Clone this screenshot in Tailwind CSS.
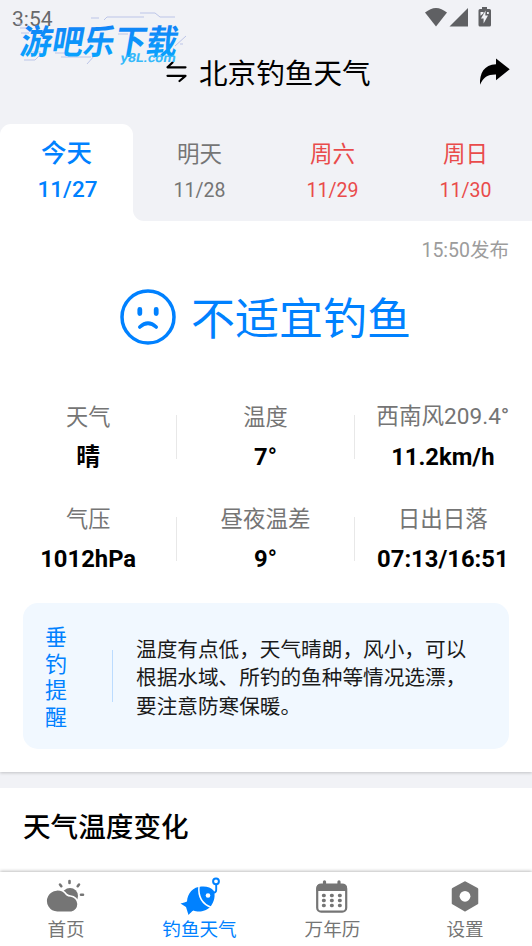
<!DOCTYPE html>
<html lang="zh-CN">
<head>
<meta charset="utf-8">
<title>北京钓鱼天气</title>
<script src="https://cdn.jsdelivr.net/npm/@tailwindcss/browser@4"></script>
</head>
<body class="bg-[#f1f2f6]">
<div class="relative flex h-[946px] w-[532px] flex-col overflow-hidden bg-[#f1f2f6] font-['Roboto','Noto_Sans_CJK_SC',sans-serif] text-black">
  <!-- Status bar -->
  <div class="flex h-9 shrink-0 items-center justify-between pl-[12px] pr-[40px]">
    <span class="pt-px text-[21px] leading-9 text-[#68696b]">3:54</span>
    <svg class="h-9 w-[68px]" viewBox="0 0 68 36" fill="#5f6063">
      <path d="M1 12.600Q12 3.200 23 12.600L12 26.500Z"/>
      <path d="M44 8V26.500H25.500Z"/>
      <path d="M58 7h5v2h2.500q1.500 0 1.500 1.500V25q0 1.500-1.500 1.500h-9.500q-1.500 0-1.500-1.500V10.500q0-1.500 1.500-1.500H58z"/>
      <path d="M61.600 10.500L57 18.400h2.600v5.200L64 15.500h-2.700zM56.500 12h3v1.200l-3 2.500zM63 12h1.800v2H63z" fill="#f1f2f6"/>
    </svg>
  </div>
  <!-- Title bar -->
  <header class="flex h-[88px] shrink-0 items-start pl-[166px] pr-[22px]">
    <svg class="mt-[25px] h-[22px] w-[21px]" viewBox="0 0 21 22" fill="none" stroke="#000" stroke-width="2.200" stroke-linecap="round" stroke-linejoin="round"><path d="M19.500 6.300H1.500L6.500 1.500M1.500 14.800H19.500L13.500 20"/></svg>
    <h1 class="ml-[12px] mt-[18px] text-[28.600px] leading-[40px]">北京钓鱼天气</h1>
    <svg class="ml-auto mt-[22px] h-[28px] w-[31px]" viewBox="0 0 31 28"><path d="M17 0.500L30.700 11.300L17 22.200V16.500C9 16.300 4.500 19 1 26.800C0.500 15 5 7 17 6.300Z"/></svg>
  </header>
  <!-- Day tabs -->
  <div class="relative z-10 grid h-[97px] shrink-0 grid-cols-4 bg-white text-center">
    <div class="bg-linear-to-b from-[#f1f2f6] from-50% to-white to-50%"><div class="h-full rounded-t-[11px] bg-white pt-[11px] font-medium text-[#0081ff]">
      <div class="text-[25.500px] leading-9">今天</div>
      <div class="mt-px pl-[2px] text-[22.500px] leading-[34px]">11/27</div>
    </div></div>
    <div class="rounded-bl-[11px] bg-[#f1f2f6] pt-[12px] text-[#757575]">
      <div class="text-[22.500px] leading-9">明天</div>
      <div class="mt-0.5 text-[19.500px] leading-[34px]">11/28</div>
    </div>
    <div class="bg-[#f1f2f6] pt-[12px] text-[#e94b4b]">
      <div class="text-[22.500px] leading-9">周六</div>
      <div class="mt-0.5 text-[19.500px] leading-[34px]">11/29</div>
    </div>
    <div class="bg-[#f1f2f6] pt-[12px] text-[#e94b4b]">
      <div class="text-[22.500px] leading-9">周日</div>
      <div class="mt-0.5 text-[19.500px] leading-[34px]">11/30</div>
    </div>
  </div>
  <!-- Conditions -->
  <section class="flex h-[551px] shrink-0 flex-col bg-white shadow-[0_1px_3px_rgba(0,0,0,0.2)]">
    <div class="mt-[15px] pr-[23px] text-right text-[19.500px] leading-[30px] text-[#9c9c9c]">15:50发布</div>
    <div class="mt-[21px] flex h-[60px] items-center pl-[119px] text-[#0081ff]">
      <svg class="h-[58px] w-[58px]" viewBox="0 0 58 58" fill="none" stroke="currentColor" stroke-linecap="round"><circle cx="29" cy="29" r="26" stroke-width="3.500"/><path d="M20.800 21.500v4M37.200 21.500v4" stroke-width="4.800"/><path d="M20.800 39Q29 31.500 37.200 39" stroke-width="3.600"/></svg>
      <span class="ml-[14px] pt-[6px] text-[44px] leading-[60px]">不适宜钓鱼</span>
    </div>
    <div class="mt-[50px] grid grid-cols-3 gap-y-[21.500px] text-center">
      <div class="flex h-20 items-center"><div class="flex-1"><div class="text-[22.200px] leading-10 text-[#757575]">天气</div><div class="text-[23.800px] font-bold leading-10">晴</div></div><i class="h-[44px] w-px bg-[#e8e8e8]"></i></div>
      <div class="flex h-20 items-center"><div class="flex-1"><div class="text-[22.200px] leading-10 text-[#757575]">温度</div><div class="text-[23.800px] font-bold leading-10">7°</div></div><i class="h-[44px] w-px bg-[#e8e8e8]"></i></div>
      <div class="flex h-20 items-center pr-px"><div class="flex-1"><div class="whitespace-nowrap text-[22.600px] leading-10 text-[#757575]">西南风209.4°</div><div class="text-[23.800px] font-bold leading-10">11.2km/h</div></div></div>
      <div class="flex h-20 items-center"><div class="flex-1"><div class="text-[22.200px] leading-10 text-[#757575]">气压</div><div class="text-[23.800px] font-bold leading-10">1012hPa</div></div><i class="h-[44px] w-px bg-[#e8e8e8]"></i></div>
      <div class="flex h-20 items-center"><div class="flex-1"><div class="text-[22.500px] leading-10 text-[#757575]">昼夜温差</div><div class="text-[23.800px] font-bold leading-10">9°</div></div><i class="h-[44px] w-px bg-[#e8e8e8]"></i></div>
      <div class="flex h-20 items-center pr-px"><div class="flex-1"><div class="text-[22.500px] leading-10 text-[#757575]">日出日落</div><div class="text-[23.800px] font-bold leading-10">07:13/16:51</div></div></div>
    </div>
    <div class="mx-[23px] mt-[24.500px] flex h-[146px] items-center rounded-[15px] bg-[#f1f8ff]">
      <div class="ml-[22px] w-[23px] pt-[4px] text-[22px] leading-[26.500px] text-[#0081ff]">垂钓提醒</div>
      <i class="ml-[44px] h-[52px] w-px bg-[#bcdcff]"></i>
      <p class="ml-[23px] w-[336px] pt-[5px] text-[20.650px] leading-[28.500px] text-[#1a1a1a]">温度有点低，天气晴朗，风小，可以<br>根据水域、所钓的鱼种等情况选漂，<br>要注意防寒保暖。</p>
    </div>
  </section>
  <!-- Temperature trend -->
  <section class="mt-4 h-[84px] shrink-0 bg-white pl-[23px] pt-[20px]">
    <h2 class="text-[27.600px] font-medium leading-10">天气温度变化</h2>
  </section>
  <!-- Bottom navigation -->
  <nav class="grid flex-1 grid-cols-4 bg-white text-center text-[18.600px] text-[#757575] shadow-[0_-1px_3px_rgba(0,0,0,0.25)]">
    <div class="flex flex-col items-center pt-[4px]">
      <svg class="mr-[3px] h-[40px] w-[40px]" viewBox="0 0 40 40"><circle cx="25" cy="20" r="8" fill="currentColor"/><path d="M24.500 5v2M15 8.500l1.300 1.700M34 8.500l-1.300 1.700M36 18.800H38" stroke="currentColor" stroke-width="2.600" stroke-linecap="round"/><path d="M12.500 36.200A11.200 11.200 0 1 1 21.500 18.500Q23.500 20 25.500 20A8.200 8.200 0 0 1 26.500 36.200Z" fill="currentColor" stroke="#fff" stroke-width="1.600"/></svg>
      <span class="mr-px mt-px leading-[26px]">首页</span>
    </div>
    <div class="flex flex-col items-center pt-[4px] text-[#0081ff]">
      <svg class="h-[40px] w-[40px]" viewBox="0 0 40 40" fill="none"><path d="M0.500 27.500C3.500 26.500 5.500 26.500 7 25.500C7.500 17 13 11 21.500 10.500C26.500 10 31 11.500 33.500 14.500C36 19 34 26 31 30C26 36 18 36.500 13.500 34.500C11.500 35.500 10.500 37 8.500 39L6 31Z" fill="currentColor"/><path d="M19 10C18 20 22 28 31.500 31.500" stroke="#fff" stroke-width="1.500"/><circle cx="28" cy="19.500" r="2.300" fill="#fff"/><circle cx="36" cy="5.300" r="2.900" stroke="currentColor" stroke-width="2"/><path d="M36.200 8.500V14Q36.200 17 32.500 16.500" stroke="currentColor" stroke-width="1.900"/></svg>
      <span class="mt-px leading-[26px]">钓鱼天气</span>
    </div>
    <div class="flex flex-col items-center pt-[4px]">
      <svg class="mr-px h-[40px] w-[40px]" viewBox="0 0 40 40" fill="none" stroke="currentColor"><rect x="5.200" y="8.700" width="29" height="27" rx="4" stroke-width="2.200"/><path d="M4.500 15V12q0-4 4-4h22.500q4 0 4 4v3z" fill="currentColor" stroke="none"/><path d="M12.500 5.800v4M27 5.800v4" stroke-width="3.200" stroke-linecap="round"/><path d="M11.500 19.500h.7M19.500 19.500h.7M27.500 19.500h.7M11.500 24.500h.7M19.500 24.500h.7M27.500 24.500h.7M11.500 29.500h.7M19.500 29.500h.7M27.500 29.500h.7" stroke-width="3.400" stroke-linecap="round"/></svg>
      <span class="mt-px leading-[26px]">万年历</span>
    </div>
    <div class="flex flex-col items-center pt-[4px]">
      <svg class="mr-px h-[40px] w-[40px]" viewBox="0 0 40 40"><path d="M20 6.500L32 13.200V27.200L20 34.200L8 27.200V13.200Z" fill="currentColor" stroke="currentColor" stroke-width="2.500" stroke-linejoin="round"/><circle cx="20" cy="20.300" r="5.400" fill="#fff"/></svg>
      <span class="mr-px mt-px leading-[26px]">设置</span>
    </div>
  </nav>
  <!-- Watermark overlay -->
  <div class="absolute left-[15px] top-[10px] h-[60px] w-[175px]">
    <svg class="h-full w-full overflow-visible" viewBox="0 0 175 60">
      <defs><linearGradient id="wm" x1="0" y1="0" x2="0" y2="1"><stop offset="0" stop-color="#1479f4"/><stop offset="1" stop-color="#07a9ff"/></linearGradient></defs>
      <path d="M76 8h8M89 10l3-3h37M125 3h15l5 4h15M2 14h5M5 18h12M6 23h8M103 24h10M9 50h11l5-5M40 43h10M46 47h30M14 42h12M72 54l8-9M160 36l11-10M165 34h3" fill="none" stroke="#bcc5e8" stroke-width="1"/>
      <text transform="translate(4 43.500) skewX(-10)" font-family="'Noto Sans CJK SC', sans-serif" font-weight="700" font-size="34" textLength="157" lengthAdjust="spacingAndGlyphs" fill="url(#wm)">游吧乐下载</text>
      <text transform="translate(105 52) skewX(-10)" font-family="Roboto, sans-serif" font-weight="700" font-size="12.500" textLength="55" lengthAdjust="spacingAndGlyphs" fill="#35b9fb">y8L.com</text>
    </svg>
  </div>
</div>
</body>
</html>
